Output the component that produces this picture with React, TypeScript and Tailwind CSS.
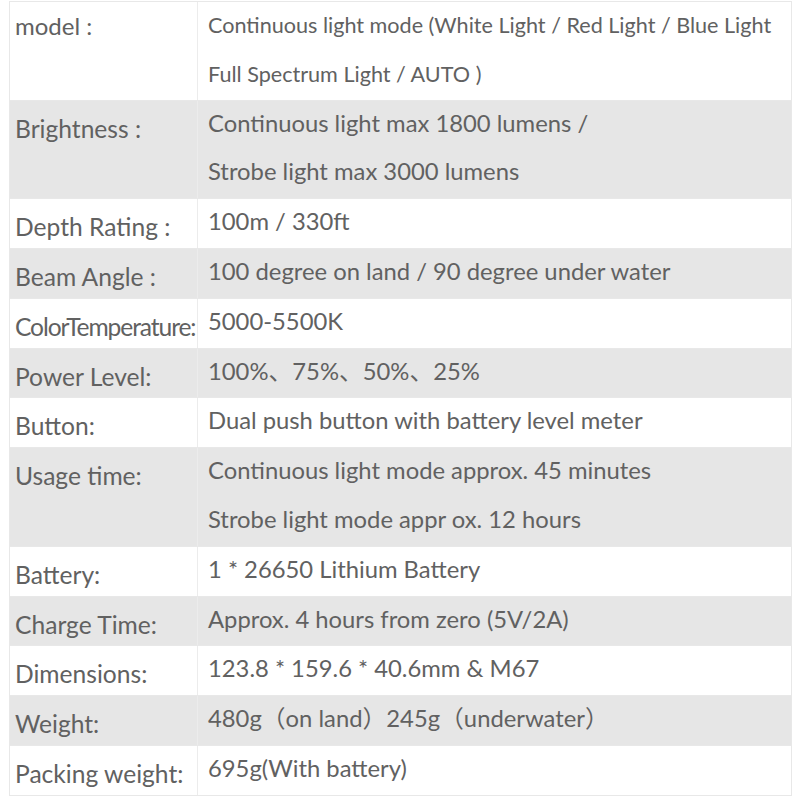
import React from "react";

type Row = { label: string; lines: string[]; tight?: boolean; first?: boolean };

const rows: Row[] = [
  {
    label: "model :",
    first: true,
    lines: [
      "Continuous light mode (White Light / Red Light / Blue Light",
      "Full Spectrum Light / AUTO )",
    ],
  },
  {
    label: "Brightness :",
    lines: ["Continuous light max 1800 lumens /", "Strobe light max 3000 lumens"],
  },
  { label: "Depth Rating :", lines: ["100m / 330ft"] },
  { label: "Beam Angle :", lines: ["100 degree on land / 90 degree under water"] },
  { label: "ColorTemperature:", tight: true, lines: ["5000-5500K"] },
  { label: "Power Level:", lines: ["100%、75%、50%、25%"] },
  { label: "Button:", lines: ["Dual push button with battery level meter"] },
  {
    label: "Usage time:",
    lines: ["Continuous light mode approx. 45 minutes", "Strobe light mode appr ox. 12 hours"],
  },
  { label: "Battery:", lines: ["1 * 26650 Lithium Battery"] },
  { label: "Charge Time:", lines: ["Approx. 4 hours from zero (5V/2A)"] },
  { label: "Dimensions:", lines: ["123.8 * 159.6 * 40.6mm & M67"] },
  { label: "Weight:", lines: ["480g（on land）245g（underwater）"] },
  { label: "Packing weight:", lines: ["695g(With battery)"] },
];

export default function App() {
  return (
    <div
      className="w-[800px] h-[800px] bg-white pt-[1px] pl-[9px] overflow-hidden text-[#616161]"
      style={{ fontFamily: "Lato, 'Noto Sans CJK SC', sans-serif" }}
    >
      <div className="w-[783px] border border-[#e8e8e8]">
        {rows.map((row, i) => (
          <div
            key={row.label}
            className={`flex border-b border-[#e8e8e8] last:border-b-0 ${
              i % 2 === 1 ? "bg-[#e6e6e6]" : "bg-white"
            }`}
          >
            <div
              className={`w-[188px] shrink-0 pl-[5px] border-r border-[#ececec] ${
                row.first ? "text-[24px] leading-[48.8px]" : "text-[24.6px] pt-[8px] leading-[40px]"
              } ${row.tight ? "tracking-[-1.1px]" : ""}`}
            >
              {row.label}
            </div>
            <div
              className={`pl-[10px] leading-[48.8px] ${
                row.first ? "text-[21.6px] -mt-[1px] pb-[1px]" : "text-[23.8px] -mt-[2px] pb-[2px]"
              }`}
            >
              {row.lines.map((l) => (
                <div key={l} className="whitespace-nowrap">
                  {l}
                </div>
              ))}
            </div>
          </div>
        ))}
      </div>
    </div>
  );
}
